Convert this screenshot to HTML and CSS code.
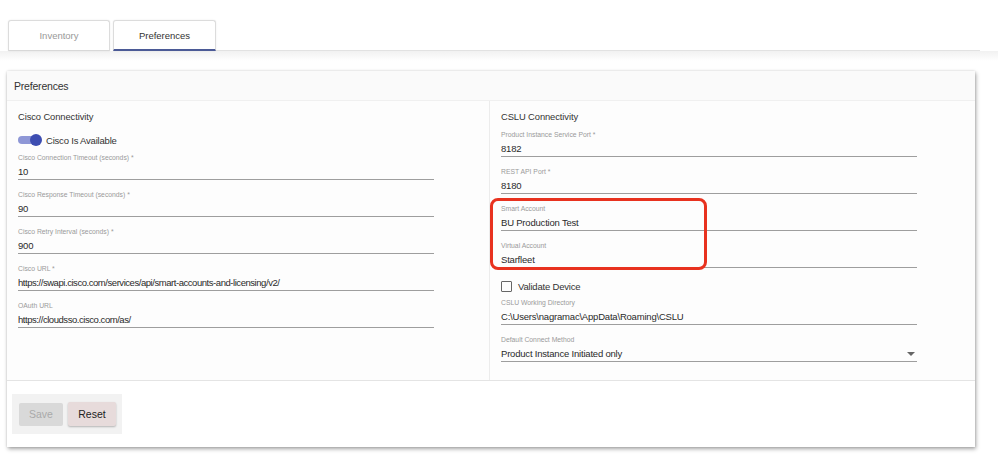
FILE: index.html
```html
<!DOCTYPE html>
<html>
<head>
<meta charset="utf-8">
<link rel="stylesheet" href="styles.css">
</head>
<body>
<div class="tabbar">
  <div class="tab">Inventory</div>
  <div class="tab active">Preferences</div>
  <div class="tab-rest"></div>
</div>
<div class="band"></div>
<div class="card">
  <div class="card-header">Preferences</div>
  <div class="columns">
    <div class="col left">
      <div class="col-title">Cisco Connectivity</div>
      <div class="toggle-row">
        <span class="toggle"><span class="track"></span><span class="thumb"></span></span>
        <span class="toggle-label">Cisco Is Available</span>
      </div>
      <div class="field"><div class="label">Cisco Connection Timeout (seconds) *</div><div class="value">10</div></div>
      <div class="field"><div class="label">Cisco Response Timeout (seconds) *</div><div class="value">90</div></div>
      <div class="field"><div class="label">Cisco Retry Interval (seconds) *</div><div class="value">900</div></div>
      <div class="field"><div class="label">Cisco URL *</div><div class="value compact">https://swapi.cisco.com/services/api/smart-accounts-and-licensing/v2/</div></div>
      <div class="field"><div class="label">OAuth URL</div><div class="value compact">https://cloudsso.cisco.com/as/</div></div>
    </div>
    <div class="col right">
      <div class="col-title title-right">CSLU Connectivity</div>
      <div class="field"><div class="label">Product Instance Service Port *</div><div class="value">8182</div></div>
      <div class="field"><div class="label">REST API Port *</div><div class="value">8180</div></div>
      <div class="field"><div class="label">Smart Account</div><div class="value">BU Production Test</div></div>
      <div class="field"><div class="label">Virtual Account</div><div class="value">Starfleet</div></div>
      <div class="check-row"><span class="checkbox"></span><span class="check-label">Validate Device</span></div>
      <div class="field"><div class="label">CSLU Working Directory</div><div class="value">C:\Users\nagramac\AppData\Roaming\CSLU</div></div>
      <div class="field"><div class="label">Default Connect Method</div><div class="value select">Product Instance Initiated only<span class="caret"></span></div></div>
      <div class="highlight"></div>
    </div>
  </div>
  <div class="card-footer">
    <div class="btn-group">
      <button class="btn save" disabled>Save</button>
      <button class="btn reset">Reset</button>
    </div>
  </div>
</div>
</body>
</html>
```
FILE: styles.css
```css
* { box-sizing: border-box; }
body {
  margin: 0;
  background: #fff;
  font-family: "Liberation Sans", Arial, sans-serif;
  color: #222;
  width: 998px;
  height: 471px;
  overflow: hidden;
}
.tabbar {
  display: flex;
  align-items: flex-end;
  padding: 20px 0 0 8px;
  height: 51px;
}
.tab {
  width: 102px;
  height: 31px;
  border: 1px solid #dcdcdc;
  border-bottom: 1px solid #d8d8d8;
  border-radius: 3px 3px 0 0;
  display: flex;
  align-items: center;
  justify-content: center;
  font-size: 9.5px;
  color: #999;
  background: #fff;
  margin-right: 3px;
  box-shadow: 0 0 2px rgba(0,0,0,0.08);
}
.tab.active {
  width: 103px;
  color: #333;
  border-bottom: 2px solid #4b5a96;
}
.tab-rest {
  width: 764px;
  height: 1px;
  background: #e2e2e2;
  margin-left: -3px;
}
.band {
  height: 10px;
  background: linear-gradient(#f1f1f1, #fff);
}
.card {
  position: relative;
  margin: 10px 0 0 7px;
  width: 968px;
  height: 376px;
  background: #fff;
  box-shadow: 1px 2px 4px rgba(0,0,0,0.35), 0 0 2px rgba(0,0,0,0.12);
  display: flex;
  flex-direction: column;
}
.card-header {
  height: 30px;
  padding-left: 7px;
  display: flex;
  align-items: center;
  font-size: 10.5px;
  letter-spacing: -0.2px;
  color: #333;
  background: #fafafa;
  border-bottom: 1px solid #f0f0f0;
}
.columns {
  display: flex;
  height: 280px;
  border-bottom: 1px solid #e4e4e4;
}
.col {
  position: relative;
  background: #fdfdfd;
}
.col.left {
  width: 483px;
  padding: 9px 0 0 11px;
  border-right: 1px solid #ececec;
}
.col.right {
  width: 485px;
  padding: 9px 0 0 11px;
}
.col-title {
  font-size: 9.4px;
  letter-spacing: -0.1px;
  line-height: 14px;
  color: #333;
}
.title-right { margin-bottom: 6px; }
.toggle-row {
  display: flex;
  align-items: center;
  height: 16px;
  margin-top: 8px;
  margin-bottom: 5px;
}
.toggle {
  position: relative;
  width: 24px;
  height: 12px;
  margin-right: 4px;
}
.track {
  position: absolute;
  left: 0;
  top: 2px;
  width: 20px;
  height: 8px;
  border-radius: 4px;
  background: #8e97d6;
}
.thumb {
  position: absolute;
  right: 0;
  top: 0;
  width: 12px;
  height: 12px;
  border-radius: 50%;
  background: #3d4db1;
}
.toggle-label {
  font-size: 9.5px;
  letter-spacing: -0.2px;
  color: #333;
}
.field {
  width: 416px;
  margin-bottom: 10px;
}
.label {
  font-size: 6.8px;
  line-height: 10px;
  color: #9a9a9a;
}
.value {
  font-size: 9.5px;
  letter-spacing: -0.2px;
  line-height: 14px;
  padding-top: 2px;
  height: 17px;
  color: #2a2a2a;
  border-bottom: 1px solid #9e9e9e;
}
.value.compact {
  letter-spacing: -0.45px;
}
.value.select {
  position: relative;
}
.caret {
  position: absolute;
  right: 2px;
  top: 7px;
  width: 0;
  height: 0;
  border-left: 4px solid transparent;
  border-right: 4px solid transparent;
  border-top: 4px solid #666;
}
.check-row {
  display: flex;
  align-items: center;
  height: 16px;
  margin-top: 1px;
  margin-bottom: 4px;
}
.checkbox {
  width: 11px;
  height: 11px;
  border: 1.5px solid #666;
  border-radius: 1px;
  margin-right: 6px;
}
.check-label {
  font-size: 9.5px;
  letter-spacing: -0.2px;
  color: #333;
}
.highlight {
  position: absolute;
  left: 0;
  top: 97px;
  width: 217px;
  height: 72px;
  border: 3px solid #e8321f;
  border-radius: 8px;
}
.card-footer {
  flex: 1;
  padding: 13px 0 0 5px;
  background: #fff;
}
.btn-group {
  display: flex;
  align-items: center;
  width: 110px;
  height: 40px;
  padding-left: 7px;
  background: #f2f2f2;
}
.btn {
  font-family: "Liberation Sans", Arial, sans-serif;
  font-size: 10.5px;
  border: none;
  border-radius: 2px;
  height: 23px;
  padding: 0;
}
.btn.save {
  width: 44px;
  background: #d9d9d9;
  color: #a9a9a9;
  margin-right: 5px;
}
.btn.reset {
  width: 48px;
  height: 24px;
  background: #e7dbdb;
  color: #222;
  box-shadow: 0 1px 2px rgba(0,0,0,0.25);
}
```
